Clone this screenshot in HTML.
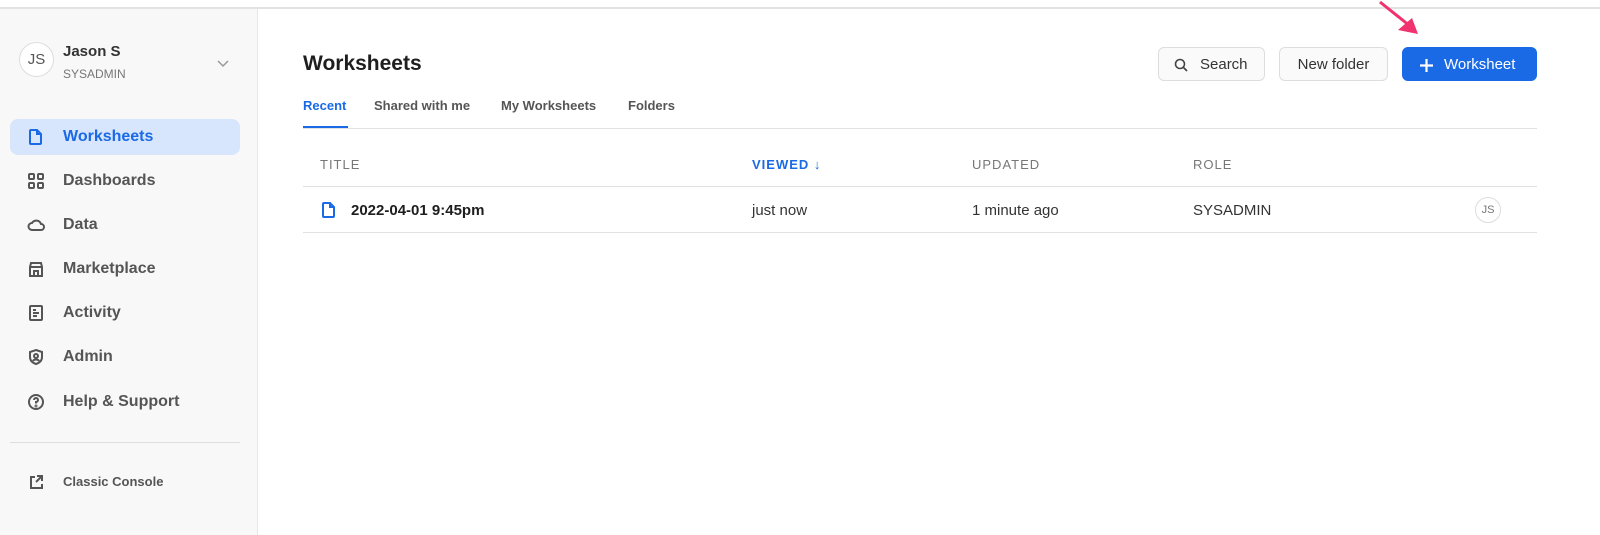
<!DOCTYPE html><html><head><style>
body{margin:0;width:1600px;height:535px;background:#fff;font-family:"Liberation Sans",sans-serif;position:relative;overflow:hidden;color:#1e1e1e}
.top{position:absolute;left:0;top:7px;width:1600px;height:2px;background:#e2e2e2}
.side{position:absolute;left:0;top:9px;width:257px;height:526px;background:#f8f8f8;border-right:1px solid #e8e8e8}
.av{position:absolute;left:19px;top:42px;width:33px;height:33px;border:1px solid #ddd;border-radius:50%;background:#fff;font-size:15px;color:#555;text-align:center;line-height:33px}
.nav{position:absolute;left:10px;width:230px;height:36px;border-radius:8px;font-size:16px;font-weight:bold;color:#555}
.nav svg{position:absolute;left:17px;top:9px}
.nav span{position:absolute;left:53px;top:9px}
.a{position:absolute;white-space:nowrap}
.btn{position:absolute;top:47px;height:34px;border:1px solid #ddd;border-radius:6px;background:#fafafa;font-size:15px;color:#333;line-height:34px;box-sizing:border-box}
.th{position:absolute;top:157px;font-size:13px;letter-spacing:1px;color:#777}
</style></head><body>
<div class="top"></div>
<div class="side">
<div class="av" style="top:33px">JS</div>
<div class="a" style="left:63px;top:34px;font-size:15px;font-weight:bold;color:#333">Jason S</div>
<div class="a" style="left:63px;top:58px;font-size:12px;color:#777">SYSADMIN</div>
<svg class="a" style="left:217px;top:51px" width="12" height="8"><path d="M1 1l5 5 5-5" fill="none" stroke="#999" stroke-width="1.5"/></svg>
<div class="nav" style="top:110px;background:#d8e6fd;color:#1a6ae6"><svg width="18" height="18" viewBox="0 0 18 18" fill="none" stroke="#1a6ae6" stroke-width="2"><path d="M4 2h6l4 4v9a1 1 0 0 1-1 1H4a1 1 0 0 1-1-1V3a1 1 0 0 1 1-1zM10 2v4h4"/></svg><span>Worksheets</span></div>
<div class="nav" style="top:154px"><svg width="18" height="18" fill="none" stroke="#555" stroke-width="2"><rect x="2" y="2" width="5" height="5" rx="1"/><rect x="11" y="2" width="5" height="5" rx="1"/><rect x="2" y="11" width="5" height="5" rx="1"/><rect x="11" y="11" width="5" height="5" rx="1"/></svg><span>Dashboards</span></div>
<div class="nav" style="top:198px"><svg width="18" height="18" fill="none" stroke="#555" stroke-width="2"><path d="M5 14h9a3 3 0 0 0 0-6 5 5 0 0 0-9-1 3.5 3.5 0 0 0 0 7z"/></svg><span>Data</span></div>
<div class="nav" style="top:242px"><svg width="18" height="18" fill="none" stroke="#555" stroke-width="2"><path d="M3 7l1-4h10l1 4v9H3zM3 7h12M7 16v-5h4v5"/></svg><span>Marketplace</span></div>
<div class="nav" style="top:286px"><svg width="18" height="18" fill="none" stroke="#555" stroke-width="2"><rect x="3" y="2" width="12" height="14" rx="1"/><path d="M6 6h3M6 9h6M6 12h4"/></svg><span>Activity</span></div>
<div class="nav" style="top:330px"><svg width="18" height="18" fill="none" stroke="#555" stroke-width="2"><path d="M9 2l6 2v5c0 4-3 6-6 7-3-1-6-3-6-7V4z"/><circle cx="9" cy="8" r="2"/><path d="M6 13c1-2 5-2 6 0"/></svg><span>Admin</span></div>
<div class="nav" style="top:375px"><svg width="18" height="18" fill="none" stroke="#555" stroke-width="2"><circle cx="9" cy="9" r="7"/><path d="M7 7a2 2 0 1 1 2 2v1.5" /><circle cx="9" cy="13" r=".5"/></svg><span>Help &amp; Support</span></div>
<div class="a" style="left:10px;top:433px;width:230px;height:1px;background:#ddd"></div>
<div class="nav" style="top:455px;font-size:13px"><svg width="18" height="18" fill="none" stroke="#555" stroke-width="2"><path d="M8 4H4v11h11v-4M10 3h5v5M15 3l-6 6"/></svg><span style="top:10px">Classic Console</span></div>
</div>
<div class="a" style="left:303px;top:52px;font-size:21px;font-weight:bold">Worksheets</div>
<div class="a" style="left:303px;top:98px;font-size:13px;font-weight:bold;color:#1a6ae6">Recent</div>
<div class="a" style="left:303px;top:126px;width:45px;height:3px;background:#1a6ae6"></div>
<div class="a" style="left:374px;top:98px;font-size:13px;font-weight:bold;color:#555">Shared with me</div>
<div class="a" style="left:501px;top:98px;font-size:13px;font-weight:bold;color:#555">My Worksheets</div>
<div class="a" style="left:628px;top:98px;font-size:13px;font-weight:bold;color:#555">Folders</div>
<div class="a" style="left:303px;top:128px;width:1234px;height:1px;background:#e2e2e2"></div>
<div class="btn" style="left:1158px;width:107px"><svg style="position:absolute;left:15px;top:10px" width="14" height="14" fill="none" stroke="#444" stroke-width="1.6"><circle cx="6" cy="6" r="4.5"/><path d="M9.5 9.5l3.5 3.5"/></svg><span style="position:absolute;left:41px">Search</span></div>
<div class="btn" style="left:1279px;width:109px;text-align:center">New folder</div>
<div class="btn" style="left:1402px;width:135px;background:#1a6ae6;border-color:#1a6ae6;color:#fff"><svg style="position:absolute;left:16px;top:10px" width="15" height="15" stroke="#fff" stroke-width="2.2"><path d="M7.5 1v13M1 7.5h13"/></svg><span style="position:absolute;left:41px">Worksheet</span></div>
<svg class="a" style="left:1370px;top:0" width="60" height="40"><path d="M10 2L40 26" stroke="#f0326e" stroke-width="3"/><path d="M48 34L28 30 42 18z" fill="#f0326e"/></svg>
<div class="th" style="left:320px">TITLE</div>
<div class="th" style="left:752px;color:#1a6ae6;font-weight:bold">VIEWED <span style="font-weight:normal">&#8595;</span></div>
<div class="th" style="left:972px">UPDATED</div>
<div class="th" style="left:1193px">ROLE</div>
<div class="a" style="left:303px;top:186px;width:1234px;height:1px;background:#e2e2e2"></div>
<svg class="a" style="left:320px;top:201px" width="18" height="18" viewBox="0 0 18 18" fill="none" stroke="#1a6ae6" stroke-width="2"><path d="M4 2h6l4 4v9a1 1 0 0 1-1 1H4a1 1 0 0 1-1-1V3a1 1 0 0 1 1-1zM10 2v4h4"/></svg>
<div class="a" style="left:351px;top:202px;font-size:15px;font-weight:bold">2022-04-01 9:45pm</div>
<div class="a" style="left:752px;top:202px;font-size:15px;color:#333">just now</div>
<div class="a" style="left:972px;top:202px;font-size:15px;color:#333">1 minute ago</div>
<div class="a" style="left:1193px;top:202px;font-size:15px;color:#333">SYSADMIN</div>
<div class="a" style="left:1475px;top:197px;width:24px;height:24px;border:1px solid #ddd;border-radius:50%;font-size:11px;color:#777;text-align:center;line-height:24px">JS</div>
<div class="a" style="left:303px;top:232px;width:1234px;height:1px;background:#e2e2e2"></div>
</body></html>
